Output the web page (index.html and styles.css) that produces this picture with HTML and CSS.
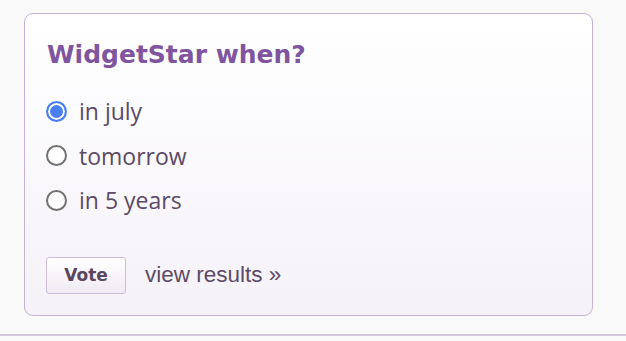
FILE: index.html
```html
<!DOCTYPE html>
<html lang="en">
<head>
    <meta charset="UTF-8">
    <title>Poll</title>
    <link rel="stylesheet" href="styles.css">
</head>
<body>
    <div class="poll">
        <h2>WidgetStar when?</h2>
        <form class="choices">
            <label class="choice"><input type="radio" name="when" checked> in july</label>
            <label class="choice"><input type="radio" name="when"> tomorrow</label>
            <label class="choice"><input type="radio" name="when"> in 5 years</label>
        </form>
        <div class="actions">
            <button class="vote-btn">Vote</button>
            <a href="#" class="results">view results &raquo;</a>
        </div>
    </div>
    <div class="page-end"></div>
</body>
</html>
```

FILE: styles.css
```css
body {
    margin: 0;
    background: #f9f9f9;
    font-family: 'Open Sans', sans-serif;
    color: #5b4a68;
}
.poll {
    margin: 13px 0 0 24px;
    width: 567px;
    height: 301px;
    box-sizing: content-box;
    border: 1px solid #c4b2d6;
    border-radius: 9px;
    background: linear-gradient(to bottom, #ffffff, #f5f2f8);
    padding: 0;
}
.poll h2 {
    margin: 26px 0 0 22px;
    font-family: 'DejaVu Sans', sans-serif;
    font-weight: bold;
    font-size: 25px;
    line-height: 30px;
    color: #7f55a0;
}
.choices {
    margin: 19px 0 0 21px;
    display: flex;
    flex-direction: column;
}
.choice {
    display: flex;
    align-items: center;
    height: 44.5px;
    font-size: 23px;
}
.choice input {
    appearance: none;
    -webkit-appearance: none;
    width: 21px;
    height: 21px;
    margin: 0 12px 0 0;
    border: 2px solid #727272;
    border-radius: 50%;
    background: #fff;
    box-sizing: border-box;
}
.choice input:checked {
    border-color: #4a7ff3;
    background: #4a7ff3;
    box-shadow: inset 0 0 0 2px #fff;
}
.actions {
    margin: 34px 0 0 21px;
    display: flex;
    align-items: center;
    gap: 19px;
}
.vote-btn {
    width: 80px;
    height: 37px;
    font-family: 'DejaVu Sans', sans-serif;
    font-weight: bold;
    font-size: 17px;
    color: #59475f;
    background: linear-gradient(to bottom, #ffffff, #f0eaf3);
    border: 1px solid #cbbdd6;
    border-radius: 3px;
    padding: 0;
}
.results {
    font-family: 'Liberation Sans', sans-serif;
    font-size: 22.5px;
    color: #5b4a68;
    text-decoration: none;
}
.page-end {
    margin-top: 18px;
    height: 2px;
    background: #d3c9de;
}
```
